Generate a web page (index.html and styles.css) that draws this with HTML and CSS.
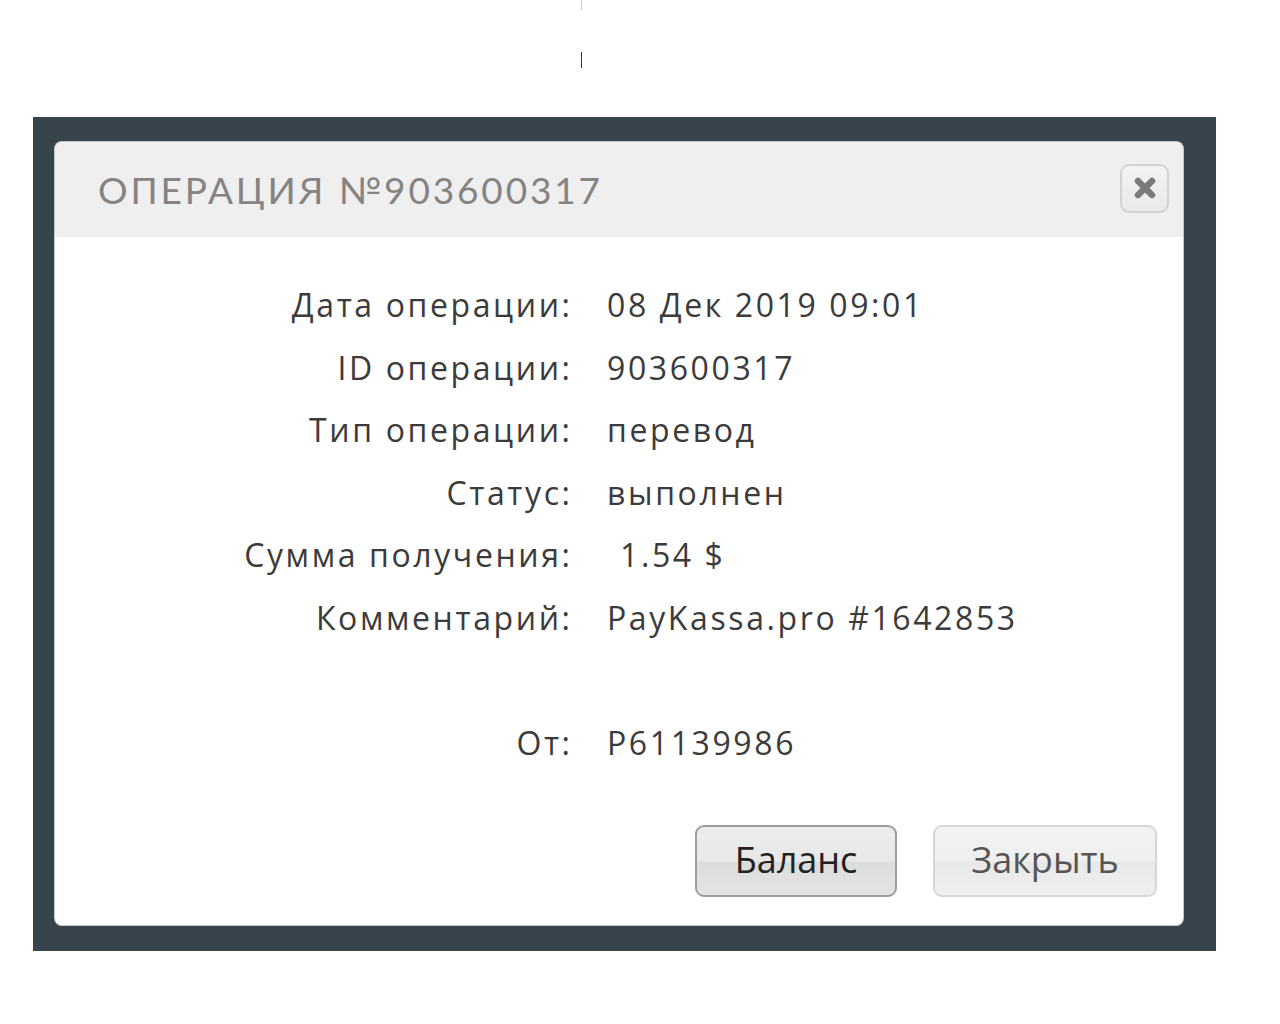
FILE: index.html
```html
<!DOCTYPE html>
<html lang="ru">
<head>
<meta charset="utf-8">
<title>Операция</title>
<link rel="stylesheet" href="styles.css">
</head>
<body>
<div class="page">
  <div class="marks">
    <span class="mark mark-faint"></span>
    <span class="mark mark-dark"></span>
  </div>
  <div class="overlay">
    <div class="modal">
      <div class="modal-head">
        <h1 class="title">ОПЕРАЦИЯ №903600317</h1>
        <button class="close-btn" aria-label="Закрыть">
          <svg width="26" height="26" viewBox="0 0 26 26"><path d="M6 6 L20 20 M20 6 L6 20" stroke="#7a7a7a" stroke-width="6.5" stroke-linecap="round"/></svg>
        </button>
      </div>
      <div class="modal-body">
        <dl class="details">
          <dt>Дата операции:</dt><dd>08 Дек 2019 09:01</dd>
          <dt>ID операции:</dt><dd>903600317</dd>
          <dt>Тип операции:</dt><dd>перевод</dd>
          <dt>Статус:</dt><dd>выполнен</dd>
          <dt>Сумма получения:</dt><dd><span class="amount">1.54 $</span></dd>
          <dt>Комментарий:</dt><dd>PayKassa.pro #1642853</dd>
          <dt class="blank"></dt><dd class="blank"></dd>
          <dt>От:</dt><dd>P61139986</dd>
        </dl>
      </div>
      <div class="modal-foot">
        <button class="btn btn-primary">Баланс</button>
        <button class="btn btn-secondary">Закрыть</button>
      </div>
    </div>
  </div>
</div>
</body>
</html>
```

FILE: styles.css
```css
* { box-sizing: border-box; }
html, body { margin: 0; padding: 0; background: #fff; }
body { font-family: "Open Sans", "Noto Sans", sans-serif; }

.page {
  width: 1280px;
  height: 1024px;
}

.marks {
  position: relative;
  height: 117px;
}
.mark {
  position: absolute;
  left: 581px;
  width: 1px;
}
.mark-faint { top: 0; height: 10px; background: #c9ccd2; }
.mark-dark { top: 52px; height: 16px; background: #333; }

.overlay {
  margin-left: 33px;
  width: 1183px;
  height: 834px;
  background: #37444c;
  padding: 25px 33px 26px 22px;
}

.modal {
  background: #fff;
  border-radius: 7px;
  height: 783px;
  overflow: hidden;
  box-shadow: 0 1px 0 #c8cbcd, 0 0 0 1px #c5c8ca;
  display: flex;
  flex-direction: column;
}

.modal-head {
  background: #efefef;
  height: 95px;
  display: flex;
  align-items: center;
  justify-content: space-between;
  padding: 0 14px 0 43px;
}

.title {
  margin: 0;
  font-family: "Lato", "Open Sans", sans-serif;
  font-weight: 400;
  font-size: 37px;
  letter-spacing: 2.85px;
  color: #868482;
}

.close-btn {
  width: 49px;
  height: 49px;
  margin-top: -3px;
  border: 2px solid #d2d2d2;
  border-radius: 9px;
  background: linear-gradient(#f3f3f3, #e9e9e9);
  display: flex;
  align-items: center;
  justify-content: center;
  padding: 0;
}

.modal-body {
  padding: 37px 0 0 0;
}

.details {
  margin: 0;
  display: grid;
  grid-template-columns: 515px 1fr;
  column-gap: 37px;
  font-family: "Open Sans", sans-serif;
  font-size: 32px;
  letter-spacing: 2.6px;
  color: #3b3b3b;
  line-height: 62.5px;
}
.details dt {
  text-align: right;
  margin: 0;
  margin-right: -2.6px;
}
.details dd {
  margin: 0;
  white-space: nowrap;
}
.details .blank { height: 62.5px; }
.amount { padding-left: 13px; }

.modal-foot {
  margin-top: auto;
  display: flex;
  justify-content: flex-end;
  gap: 36px;
  padding: 0 26px 28px 0;
}

.btn {
  height: 72px;
  border-radius: 9px;
  font-family: "Open Sans", sans-serif;
  font-size: 36px;
  padding: 0 0 3px 0;
}
.btn-primary {
  width: 202px;
  border: 2px solid #9d9d9d;
  background: linear-gradient(#ececec 0%, #e8e8e8 50%, #dcdcdc 52%, #e4e4e4 100%);
  color: #222;
}
.btn-secondary {
  width: 224px;
  border: 2px solid #d6d6d6;
  background: linear-gradient(#f3f3f3 0%, #efefef 50%, #e8e8e8 52%, #efefef 100%);
  color: #555;
}
```
